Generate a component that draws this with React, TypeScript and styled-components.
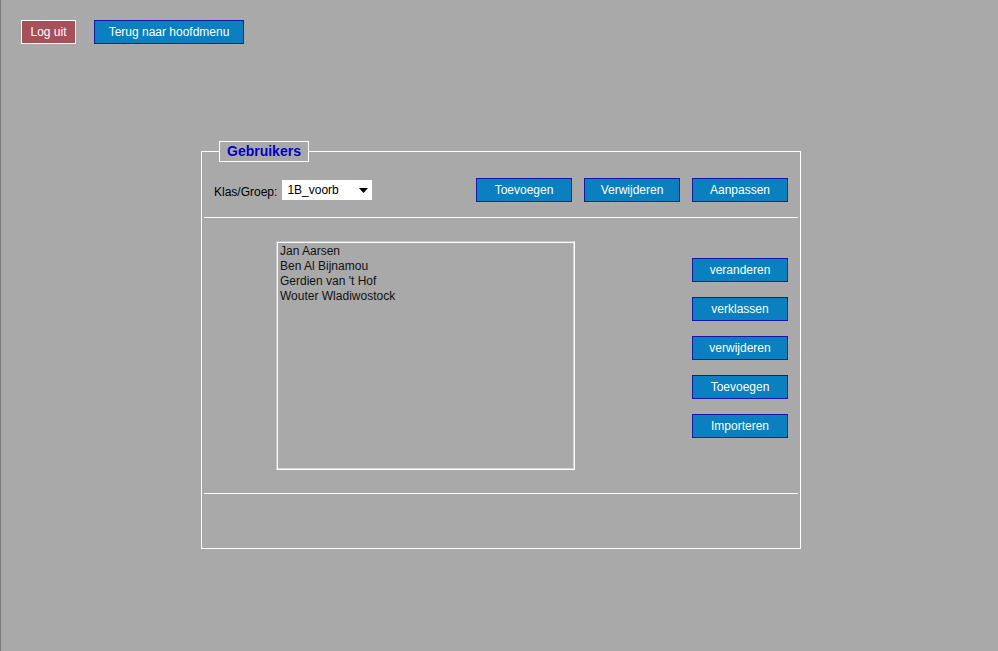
import React from "react";
import styled, { createGlobalStyle } from "styled-components";

const Global = createGlobalStyle`
  html, body { margin: 0; padding: 0; }
  body {
    background: #a9a9a9;
    font-family: "Liberation Sans", Arial, sans-serif;
    font-size: 12px;
  }
`;

const Page = styled.div`
  min-height: 100vh;
  box-sizing: border-box;
  border-left: 1px solid #7c7c7c;
  background: #a9a9a9;
  padding: 20px 0 0 20px;
`;

const TopBar = styled.div`
  display: flex;
  gap: 18px;
  height: 24px;
`;

const Btn = styled.button<{ $variant?: "blue" | "red"; $w: number }>`
  box-sizing: border-box;
  width: ${(p) => p.$w}px;
  height: 24px;
  padding: 0;
  margin: 0;
  font-family: "Liberation Sans", Arial, sans-serif;
  font-size: 12px;
  color: #ffffff;
  background: ${(p) => (p.$variant === "red" ? "#a8505a" : "#0a80c0")};
  border: 1px solid ${(p) => (p.$variant === "red" ? "#ffffff" : "#1818a8")};
  cursor: pointer;
`;

const Fieldset = styled.fieldset`
  box-sizing: border-box;
  width: 600px;
  margin: 97px 0 0 180px;
  padding: 0;
  border: 1px solid #ffffff;
  min-inline-size: auto;
  height: 408px;
`;

const Legend = styled.legend`
  margin-left: 17px;
  padding: 2px 7px 2px 7px;
  border: 1px solid #ffffff;
  font-family: "Liberation Sans", Arial, sans-serif;
  font-weight: bold;
  font-size: 14px;
  line-height: 15px;
  color: #0000c8;
`;

const HeaderRow = styled.div`
  display: flex;
  align-items: center;
  padding: 16px 12px 0 12px;
  height: 24px;
`;

const Label = styled.span`
  color: #000;
  font-size: 12px;
  margin-top: 4px;
  margin-right: 5px;
`;

const SelectBox = styled.div`
  box-sizing: border-box;
  width: 90px;
  height: 20px;
  background: #ffffff;
  display: flex;
  align-items: center;
  justify-content: space-between;
  padding: 0 4px 0 5px;
  font-size: 12px;
  color: #000;
`;

const Spacer = styled.div`
  flex: 1;
`;

const ButtonGroup = styled.div`
  display: flex;
  gap: 12px;
`;

const Divider = styled.div`
  height: 0;
  border-top: 1px solid #ffffff;
  margin: 0 2px;
`;

const TopDivider = styled(Divider)`
  margin-top: 15px;
`;

const Main = styled.div`
  display: flex;
  align-items: flex-start;
  padding: 23px 12px 23px 74px;
`;

const ListBox = styled.div`
  box-sizing: border-box;
  width: 299px;
  height: 229px;
  border: 1px solid;
  border-color: #c4c4c4 #ffffff #ffffff #c4c4c4;
  box-shadow: inset 1px 1px 0 #ffffff, inset -1px -1px 0 #d4d4d4;
  padding: 2px 3px;
  font-size: 12px;
  line-height: 15px;
  color: #111;
`;

const ListItem = styled.div`
  white-space: nowrap;
`;

const SideButtons = styled.div`
  display: flex;
  flex-direction: column;
  gap: 15px;
  margin-top: 17px;
  margin-left: auto;
`;

export default function App() {
  return (
    <>
      <Global />
      <Page>
        <TopBar>
          <Btn $variant="red" $w={55}>Log uit</Btn>
          <Btn $w={150}>Terug naar hoofdmenu</Btn>
        </TopBar>
        <Fieldset>
          <Legend>Gebruikers</Legend>
          <HeaderRow>
            <Label>Klas/Groep:</Label>
            <SelectBox>
              <span>1B_voorb</span>
              <svg width="9" height="5" viewBox="0 0 9 5">
                <path d="M0 0 H9 L4.5 5 Z" fill="#000" />
              </svg>
            </SelectBox>
            <Spacer />
            <ButtonGroup>
              <Btn $w={96}>Toevoegen</Btn>
              <Btn $w={96}>Verwijderen</Btn>
              <Btn $w={96}>Aanpassen</Btn>
            </ButtonGroup>
          </HeaderRow>
          <TopDivider />
          <Main>
            <ListBox>
              <ListItem>Jan Aarsen</ListItem>
              <ListItem>Ben Al Bijnamou</ListItem>
              <ListItem>Gerdien van 't Hof</ListItem>
              <ListItem>Wouter Wladiwostock</ListItem>
            </ListBox>
            <SideButtons>
              <Btn $w={96}>veranderen</Btn>
              <Btn $w={96}>verklassen</Btn>
              <Btn $w={96}>verwijderen</Btn>
              <Btn $w={96}>Toevoegen</Btn>
              <Btn $w={96}>Importeren</Btn>
            </SideButtons>
          </Main>
          <Divider />
        </Fieldset>
      </Page>
    </>
  );
}
